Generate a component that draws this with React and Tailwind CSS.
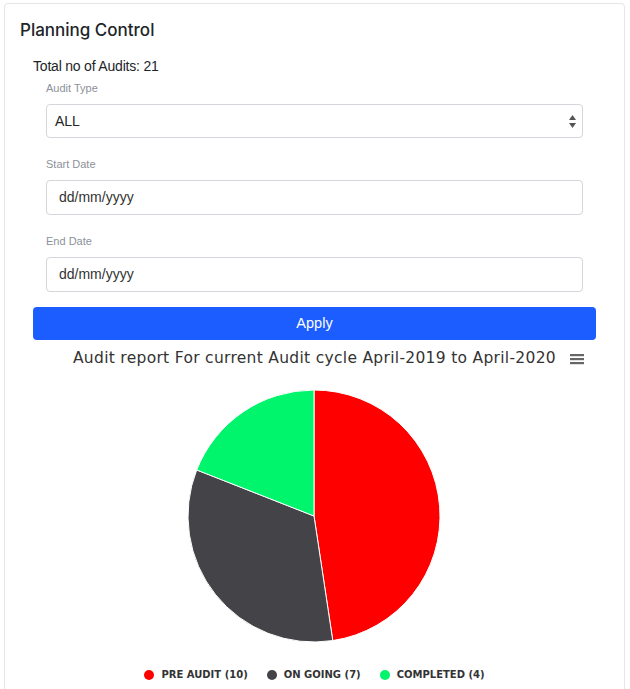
const slices = [
  { name: 'PRE AUDIT', value: 10, color: '#ff0000' },
  { name: 'ON GOING', value: 7, color: '#434348' },
  { name: 'COMPLETED', value: 4, color: '#00f56c' },
]

// Builds the pie wedge paths, starting at 12 o'clock and going clockwise.
function wedges(cx, cy, r) {
  const total = slices.reduce((s, x) => s + x.value, 0)
  let start = 0
  return slices.map((s) => {
    const end = start + (s.value / total) * Math.PI * 2
    const x1 = cx + r * Math.sin(start)
    const y1 = cy - r * Math.cos(start)
    const x2 = cx + r * Math.sin(end)
    const y2 = cy - r * Math.cos(end)
    const large = end - start > Math.PI ? 1 : 0
    const d = `M${cx},${cy} L${x1},${y1} A${r},${r} 0 ${large} 1 ${x2},${y2} Z`
    start = end
    return { ...s, d }
  })
}

function Field({ label, children }) {
  return (
    <div className="px-[13px]">
      <label className="block text-[11px] text-[#8c9199] leading-[14px] mb-[9px]">{label}</label>
      {children}
    </div>
  )
}

export default function App() {
  return (
    <div className="min-h-screen bg-white pt-[3px] pl-[4px] pr-[5px] font-['Liberation_Sans',Arial,sans-serif]">
      <div className="border border-[#e6e6e6] rounded-[4px] h-[720px]">
        <h1 className="pl-[15px] pt-[14px] font-['Inter',sans-serif] text-[17px] leading-[24px] font-medium text-[#212529]">Planning Control</h1>

        <div className="px-[28px] mt-[14px]">
          <p className="text-[14px] leading-[20px] text-[#212529] tracking-[-0.2px]">Total no of Audits: 21</p>

          <div className="mt-[5px] flex flex-col gap-[19px]">
            <Field label="Audit Type">
              <div className="relative h-[34px] border border-[#d3d6da] rounded-[4px] flex items-center pl-[8px]">
                <span className="text-[14px] text-[#212529]">ALL</span>
                <svg className="absolute right-[6px] top-[10px]" width="7" height="13" viewBox="0 0 7 13">
                  <path d="M3.5 0 L7 5 L0 5 Z" fill="#555" />
                  <path d="M3.5 13 L7 8 L0 8 Z" fill="#555" />
                </svg>
              </div>
            </Field>
            <Field label="Start Date">
              <div className="h-[35px] border border-[#d3d6da] rounded-[4px] flex items-center pl-[12px]">
                <span className="text-[14px] text-[#333]">dd/mm/yyyy</span>
              </div>
            </Field>
            <Field label="End Date">
              <div className="h-[35px] border border-[#d3d6da] rounded-[4px] flex items-center pl-[12px]">
                <span className="text-[14px] text-[#333]">dd/mm/yyyy</span>
              </div>
            </Field>
          </div>

          <button className="mt-[15px] w-full h-[33px] rounded-[4px] bg-[#1b5dff] text-white text-[14.5px]">Apply</button>

          <div className="relative mt-[7px] h-[24px] flex items-center justify-center">
            <span className="font-['DejaVu_Sans',sans-serif] text-[15.5px] text-[#333] tracking-[0.3px]">
              Audit report For current Audit cycle April-2019 to April-2020
            </span>
            <svg className="absolute right-[12px] top-[6px]" width="14" height="12" viewBox="0 0 14 12">
              <rect x="0" y="1" width="14" height="2.2" fill="#666" />
              <rect x="0" y="5" width="14" height="2.2" fill="#666" />
              <rect x="0" y="9" width="14" height="2.2" fill="#666" />
            </svg>
          </div>

          <div className="flex justify-center mt-[18px] pr-[1px]">
            <svg width="254" height="254" viewBox="0 0 254 254">
              {wedges(127, 127, 126).map((w) => (
                <path key={w.name} d={w.d} fill={w.color} stroke="#ffffff" strokeWidth="1" strokeLinejoin="round" />
              ))}
            </svg>
          </div>

          <div className="mt-[24px] flex justify-center gap-[19px] font-['DejaVu_Sans',sans-serif] text-[10px] font-bold text-[#333]">
            {slices.map((s) => (
              <div key={s.name} className="flex items-center gap-[7px]">
                <span className="w-[10px] h-[10px] rounded-full" style={{ backgroundColor: s.color }} />
                <span>{s.name} ({s.value})</span>
              </div>
            ))}
          </div>
        </div>
      </div>
    </div>
  )
}
